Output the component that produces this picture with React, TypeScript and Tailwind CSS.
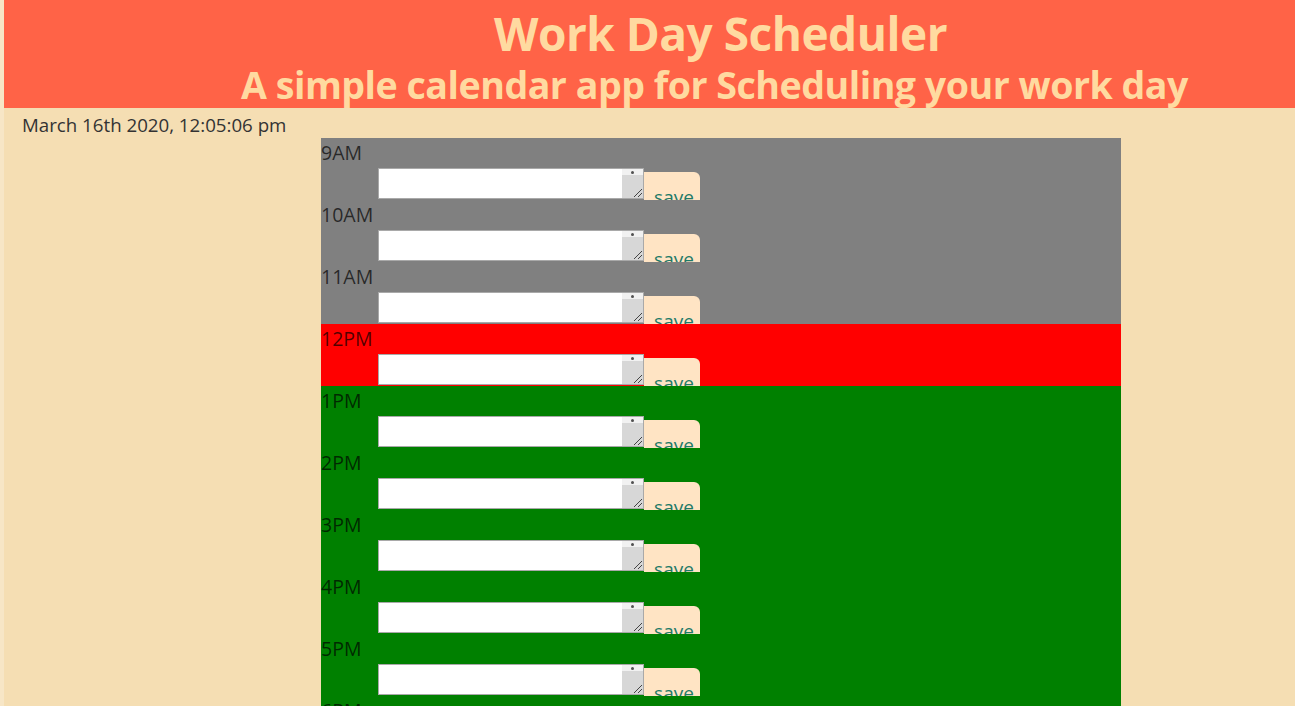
import { useState } from "react";

type Hour = {
  label: string;
  state: "past" | "present" | "future";
};

const hours: Hour[] = [
  { label: "9AM", state: "past" },
  { label: "10AM", state: "past" },
  { label: "11AM", state: "past" },
  { label: "12PM", state: "present" },
  { label: "1PM", state: "future" },
  { label: "2PM", state: "future" },
  { label: "3PM", state: "future" },
  { label: "4PM", state: "future" },
  { label: "5PM", state: "future" },
  { label: "6PM", state: "future" },
];

const bg = {
  past: "bg-[#808080]",
  present: "bg-[#ff0000]",
  future: "bg-[#008000]",
};

// the little scrollbar Chrome draws inside the textarea
function FakeScrollbar() {
  return (
    <div className="flex w-[21px] shrink-0 flex-col bg-[#f1f1f1]">
      <div className="flex h-[6px] items-center justify-center">
        <div className="h-[3px] w-[3px] rounded-full bg-[#505050]" />
      </div>
      <div className="relative flex-1 bg-[#d7d7d7]">
        <svg className="absolute right-0 bottom-0" width="12" height="12" viewBox="0 0 12 12">
          <path d="M11 3 L3 11 M11 7 L7 11" stroke="#444" strokeWidth="1" />
        </svg>
      </div>
    </div>
  );
}

function HourRow({ hour }: { hour: Hour }) {
  const [text, setText] = useState("");
  return (
    <div className={`h-[62px] ${bg[hour.state]}`}>
      <div className="h-[30px] pt-[3px] text-[19.5px] leading-[24px] text-black/70">{hour.label}</div>
      <div className="flex h-[32px] items-end pl-[57px]">
        <div className="mb-[1px] flex h-[31px] w-[266px] border border-[#a9a9a9] bg-white">
          <textarea
            value={text}
            onChange={(e) => setText(e.target.value)}
            rows={1}
            className="min-w-0 flex-1 resize-none bg-white text-[13px] leading-[16px] outline-none"
          />
          <FakeScrollbar />
        </div>
        <button className="h-[28px] w-[56px] overflow-hidden rounded-tr-[6px] bg-[#ffe4c4] pl-[4px] pt-[13px] text-[19px] leading-[24px] text-[#1f7a68]">
          save
        </button>
      </div>
    </div>
  );
}

export default function App() {
  return (
    <div className="flex min-h-[706px] bg-[#f5deb3] font-['Open_Sans','Noto_Sans',sans-serif]">
      <div className="w-[4px] shrink-0 bg-[#f7e6c6]" />
      <div className="flex-1">
        <header className="h-[108px] bg-[#ff6347] pl-[142px] text-center font-bold text-[#ffdaa0]">
          <h1 className="pt-[3px] text-[46px] leading-[60px] tracking-[-0.5px]">Work Day Scheduler</h1>
          <h2 className="-ml-[12px] text-[37.6px] leading-[44px] tracking-[-0.5px]">
            A simple calendar app for Scheduling your work day
          </h2>
        </header>
        <div className="h-[30px] pl-[18px] pt-[5px] text-[18.7px] leading-[24px] text-[#333]">
          March 16th 2020, 12:05:06 pm
        </div>
        <div className="ml-[317px] w-[800px]">
          {hours.map((h) => (
            <HourRow key={h.label} hour={h} />
          ))}
        </div>
      </div>
    </div>
  );
}
